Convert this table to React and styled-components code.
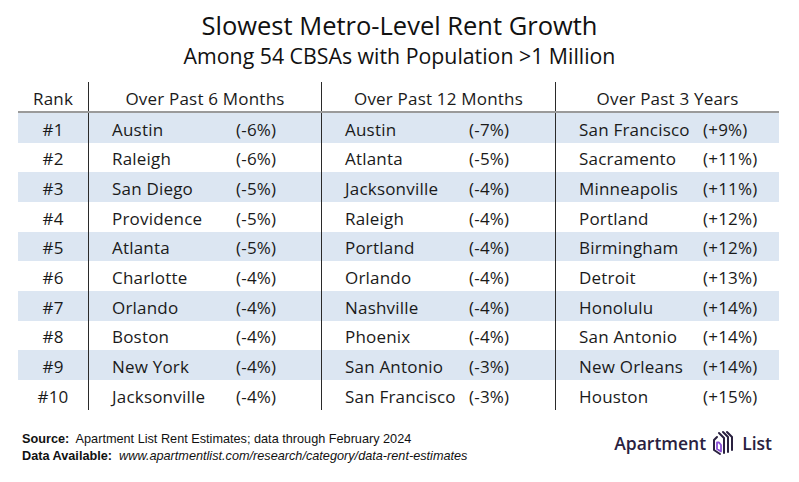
import styled, { createGlobalStyle } from "styled-components";

const GlobalStyle = createGlobalStyle`
  body {
    margin: 0;
    background: #ffffff;
    font-family: 'Open Sans', 'Noto Sans', sans-serif;
    color: #1a1a1a;
  }
`;

const Page = styled.div`
  width: 799px;
  height: 482px;
  box-sizing: border-box;
  padding-top: 10px;
  display: flex;
  flex-direction: column;
  overflow: hidden;
`;

const Title = styled.h1`
  margin: 0;
  text-align: center;
  font-size: 25.5px;
  font-weight: 400;
  line-height: 30px;
  color: #111;
`;

const Subtitle = styled.h2`
  margin: 3px 0 0;
  text-align: center;
  font-size: 21.3px;
  font-weight: 400;
  line-height: 26px;
  color: #111;
`;

const Table = styled.div`
  margin: 13px 0 0 18px;
  width: 761px;
  display: flex;
  flex-direction: column;
`;

const Row = styled.div`
  display: grid;
  box-sizing: border-box;
  grid-template-columns: 70px 233px 234px 224px;
  height: ${(p) => (p.$header ? "31px" : "29.67px")};
  background: ${(p) => (p.$shaded ? "#dce6f2" : "transparent")};
  border-bottom: ${(p) => (p.$header ? "2px solid #9a9a9a" : "none")};
  font-size: 17px;
  letter-spacing: 0.2px;
  line-height: 20px;
`;

const RankCell = styled.div`
  display: flex;
  align-items: center;
  justify-content: center;
  padding-top: 4px;
`;

const Group = styled.div`
  border-left: 1.5px solid #2a2a2a;
  display: flex;
  align-items: center;
  padding-top: 4px;
  justify-content: ${(p) => (p.$header ? "center" : "flex-start")};
  padding-left: ${(p) => (p.$header ? "0" : "23px")};
`;

const City = styled.span`
  width: 124px;
  flex: none;
`;

const Pct = styled.span``;

const Footer = styled.div`
  margin: 21px 0 0 22px;
  width: 753px;
  display: flex;
  justify-content: space-between;
  align-items: center;
`;

const Notes = styled.div`
  font-family: 'Liberation Sans', Arial, sans-serif;
  font-size: 12.7px;
  line-height: 17px;
  color: #111;
  b { font-weight: 700; }
  i { font-style: italic; }
`;

const Logo = styled.div`
  display: flex;
  align-items: center;
  gap: 5px;
  font-size: 17.5px;
  color: #2a2140;
  font-weight: 600;
  margin-top: -9px;
  margin-right: 3px;
`;

const six = [
  ["Austin", "(-6%)"], ["Raleigh", "(-6%)"], ["San Diego", "(-5%)"], ["Providence", "(-5%)"],
  ["Atlanta", "(-5%)"], ["Charlotte", "(-4%)"], ["Orlando", "(-4%)"], ["Boston", "(-4%)"],
  ["New York", "(-4%)"], ["Jacksonville", "(-4%)"],
];
const twelve = [
  ["Austin", "(-7%)"], ["Atlanta", "(-5%)"], ["Jacksonville", "(-4%)"], ["Raleigh", "(-4%)"],
  ["Portland", "(-4%)"], ["Orlando", "(-4%)"], ["Nashville", "(-4%)"], ["Phoenix", "(-4%)"],
  ["San Antonio", "(-3%)"], ["San Francisco", "(-3%)"],
];
const three = [
  ["San Francisco", "(+9%)"], ["Sacramento", "(+11%)"], ["Minneapolis", "(+11%)"], ["Portland", "(+12%)"],
  ["Birmingham", "(+12%)"], ["Detroit", "(+13%)"], ["Honolulu", "(+14%)"], ["San Antonio", "(+14%)"],
  ["New Orleans", "(+14%)"], ["Houston", "(+15%)"],
];

function LogoMark() {
  return (
    <svg width="26" height="26" viewBox="0 0 26 26" fill="none" strokeLinecap="round" strokeLinejoin="round">
      <path d="M6 7 L3 10 L3 20 L9 24" stroke="#2a2140" strokeWidth="2" />
      <path d="M6 12.5 L6 19 L10 21.5 L10 15 L8 12.5 Z" stroke="#8a4fd6" strokeWidth="1.8" />
      <path d="M8 3 L13 8 L13 23" stroke="#2a2140" strokeWidth="2" />
      <path d="M12 2 L17 7 L17 22" stroke="#2a2140" strokeWidth="2" />
      <path d="M16 2 L21 7 L21 20" stroke="#2a2140" strokeWidth="2" />
    </svg>
  );
}

export default function App() {
  return (
    <Page>
      <GlobalStyle />
      <Title>Slowest Metro-Level Rent Growth</Title>
      <Subtitle>Among 54 CBSAs with Population &gt;1 Million</Subtitle>
      <Table>
        <Row $header>
          <RankCell>Rank</RankCell>
          <Group $header>Over Past 6 Months</Group>
          <Group $header>Over Past 12 Months</Group>
          <Group $header>Over Past 3 Years</Group>
        </Row>
        {six.map((s, i) => (
          <Row key={i} $shaded={i % 2 === 0}>
            <RankCell>#{i + 1}</RankCell>
            <Group><City>{s[0]}</City><Pct>{s[1]}</Pct></Group>
            <Group><City>{twelve[i][0]}</City><Pct>{twelve[i][1]}</Pct></Group>
            <Group><City>{three[i][0]}</City><Pct>{three[i][1]}</Pct></Group>
          </Row>
        ))}
      </Table>
      <Footer>
        <Notes>
          <div><b>Source:</b>&nbsp; Apartment List Rent Estimates; data through February 2024</div>
          <div><b>Data Available:</b>&nbsp; <i>www.apartmentlist.com/research/category/data-rent-estimates</i></div>
        </Notes>
        <Logo>
          <span>Apartment</span>
          <LogoMark />
          <span>List</span>
        </Logo>
      </Footer>
    </Page>
  );
}
